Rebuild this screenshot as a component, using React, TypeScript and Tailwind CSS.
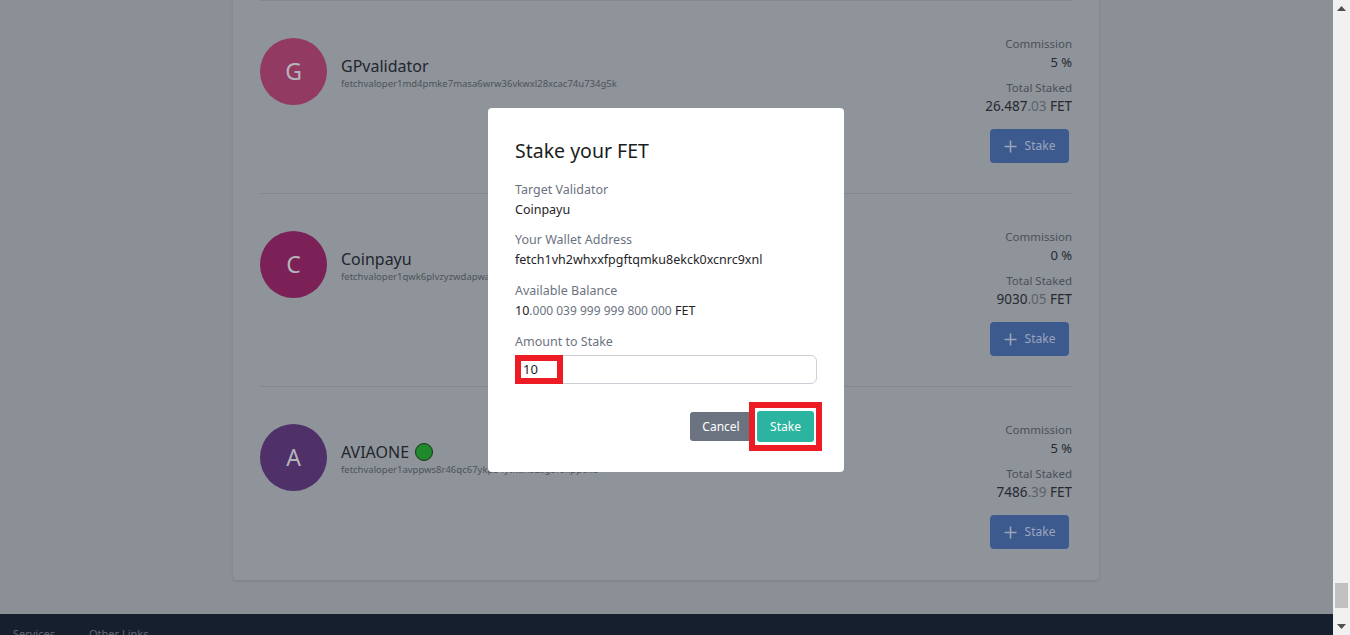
import React from 'react';

type Validator = {
  letter: string;
  name: string;
  address: string;
  avatar: string;
  commission: string;
  whole: string;
  decimals: string;
  active?: boolean;
};

const validators: Validator[] = [
  {
    letter: 'G',
    name: 'GPvalidator',
    address: 'fetchvaloper1md4pmke7masa6wrw36vkwxl28xcac74u734g5k',
    avatar: 'bg-[#933a62]',
    commission: '5 %',
    whole: '26.487',
    decimals: '.03',
  },
  {
    letter: 'C',
    name: 'Coinpayu',
    address: 'fetchvaloper1qwk6plvzyzwdapwa0r8m2cq5xv7u8nzs3hmfy4',
    avatar: 'bg-[#7c2157]',
    commission: '0 %',
    whole: '9030',
    decimals: '.05',
  },
  {
    letter: 'A',
    name: 'AVIAONE',
    address: 'fetchvaloper1avppws8r46qc67ykp54ytkun52zg5r5kppoke',
    avatar: 'bg-[#4f3068]',
    commission: '5 %',
    whole: '7486',
    decimals: '.39',
    active: true,
  },
];

const font = { fontFamily: '"Noto Sans", "Open Sans", Arial, sans-serif' };

const PlusIcon = () => (
  <svg width="13" height="13" viewBox="0 0 13 13" fill="none" stroke="currentColor" strokeWidth="1.6">
    <path d="M6.5 0.5v12M0.5 6.5h12" />
  </svg>
);

const ValidatorRow: React.FC<{ v: Validator }> = ({ v }) => (
  <div className="flex items-start justify-between border-t border-[#83888f] pt-[33px] pb-[30px]">
    <div className="mt-[4px] flex items-center gap-[14px]">
      <div
        className={`flex h-[67px] w-[67px] items-center justify-center rounded-full ${v.avatar} text-[23px] text-[#b2b4ba]`}
      >
        {v.letter}
      </div>
      <div className="mt-[3px] flex flex-col">
        <div className="flex items-center gap-[6px] text-[16px] leading-[22px] text-[#22262d]">
          <span>{v.name}</span>
          {v.active && (
            <span className="inline-block h-[18px] w-[18px] rounded-full border border-[#1b311e] bg-[#1f8a2c]" />
          )}
        </div>
        <div className="text-[9.5px] leading-[14px] text-[#4d535b]">{v.address}</div>
      </div>
    </div>
    <div className="flex flex-col items-end text-right">
      <div className="text-[11.5px] leading-[19px] text-[#4a5058]">Commission</div>
      <div className="text-[13px] leading-[19px] text-[#262a31]">{v.commission}</div>
      <div className="mt-[6px] text-[11.5px] leading-[19px] text-[#4a5058]">Total Staked</div>
      <div className="text-[13.5px] leading-[19px] text-[#262a31]">
        {v.whole}
        <span className="text-[#5d636c]">{v.decimals}</span> FET
      </div>
      <button className="mt-[13px] mr-[3px] flex h-[34px] w-[79px] items-center justify-center gap-[8px] rounded-[4px] bg-[#3d5a8f] text-[12px] text-[#9aa5bb]">
        <PlusIcon />
        <span>Stake</span>
      </button>
    </div>
  </div>
);

const Field: React.FC<{ label: string; children: React.ReactNode; className?: string }> = ({
  label,
  children,
  className = '',
}) => (
  <div className={className}>
    <div className="text-[12.5px] leading-[20px] text-[#6c737f]">{label}</div>
    <div className="text-[12.5px] leading-[20px] text-[#1f2429]">{children}</div>
  </div>
);

const StakeModal = () => (
  <div className="absolute left-[488px] top-[108px] w-[356px] rounded-[4px] bg-white px-[27px] pt-[27px] pb-[30px]">
    <h2 className="text-[19.5px] leading-[32px] text-[#1a1d21]">Stake your FET</h2>
    <Field label="Target Validator" className="mt-[13px]">
      Coinpayu
    </Field>
    <Field label="Your Wallet Address" className="mt-[10px]">
      fetch1vh2whxxfpgftqmku8ekck0xcnrc9xnl
    </Field>
    <Field label="Available Balance" className="mt-[11px]">
      10<span className="text-[12px] text-[#6c737f]">.000 039 999 999 800 000</span> FET
    </Field>
    <div className="mt-[11px] text-[12.5px] leading-[20px] text-[#6c737f]">Amount to Stake</div>
    <div className="relative mt-[3px] h-[29px] w-full rounded-[6px] border border-[#cbd0d6]">
      <div className="absolute -left-[1px] -top-[1px] flex h-[29px] w-[48px] items-center border-[6px] border-[#ed1c24] bg-white pl-[2px] text-[13px] text-[#1f2429]">
        10
      </div>
    </div>
    <div className="mt-[28px] flex justify-end gap-[5px] pr-[3px]">
      <button className="h-[29px] w-[62px] rounded-[3px] bg-[#6b7280] text-[12px] text-white">Cancel</button>
      <div className="relative mt-[-1px]">
        <span className="absolute -inset-x-[8px] -inset-y-[9px] border-[6px] border-[#ed1c24]" />
        <button className="relative h-[31px] w-[57px] rounded-[3px] bg-[#2bb5a0] text-[12px] text-white">
          Stake
        </button>
      </div>
    </div>
  </div>
);

const Scrollbar = () => (
  <div className="flex h-full w-[17px] flex-col items-center bg-[#f1f1f1]">
    <div className="flex h-[17px] w-full items-center justify-center">
      <svg width="9" height="5" viewBox="0 0 9 5">
        <path d="M4.5 0L9 5H0z" fill="#505050" />
      </svg>
    </div>
    <div className="flex-1" />
    <div className="mb-[10px] h-[25px] w-[13px] bg-[#c1c1c1]" />
    <div className="flex h-[17px] w-full items-center justify-center">
      <svg width="9" height="5" viewBox="0 0 9 5">
        <path d="M0 0H9L4.5 5z" fill="#505050" />
      </svg>
    </div>
  </div>
);

export default function App() {
  return (
    <div className="flex h-[635px] w-[1350px] overflow-hidden" style={font}>
      <div className="relative flex h-full flex-1 flex-col overflow-hidden bg-[#8b9097]">
        <main className="flex justify-center pr-[1px]">
          <div className="w-[866px] rounded-b-[4px] bg-[#8f939a] px-[27px] pb-[1px] shadow-[0_1px_3px_rgba(0,0,0,0.12)]">
            {validators.map((v) => (
              <ValidatorRow key={v.name} v={v} />
            ))}
          </div>
        </main>
        <footer className="mt-[34px] flex h-[30px] shrink-0 bg-[#161f2e] px-[13px] pt-[12px] text-[11px] text-[#626a77]">
          <span className="w-[76px]">Services</span>
          <span>Other Links</span>
        </footer>
        <StakeModal />
      </div>
      <Scrollbar />
    </div>
  );
}
